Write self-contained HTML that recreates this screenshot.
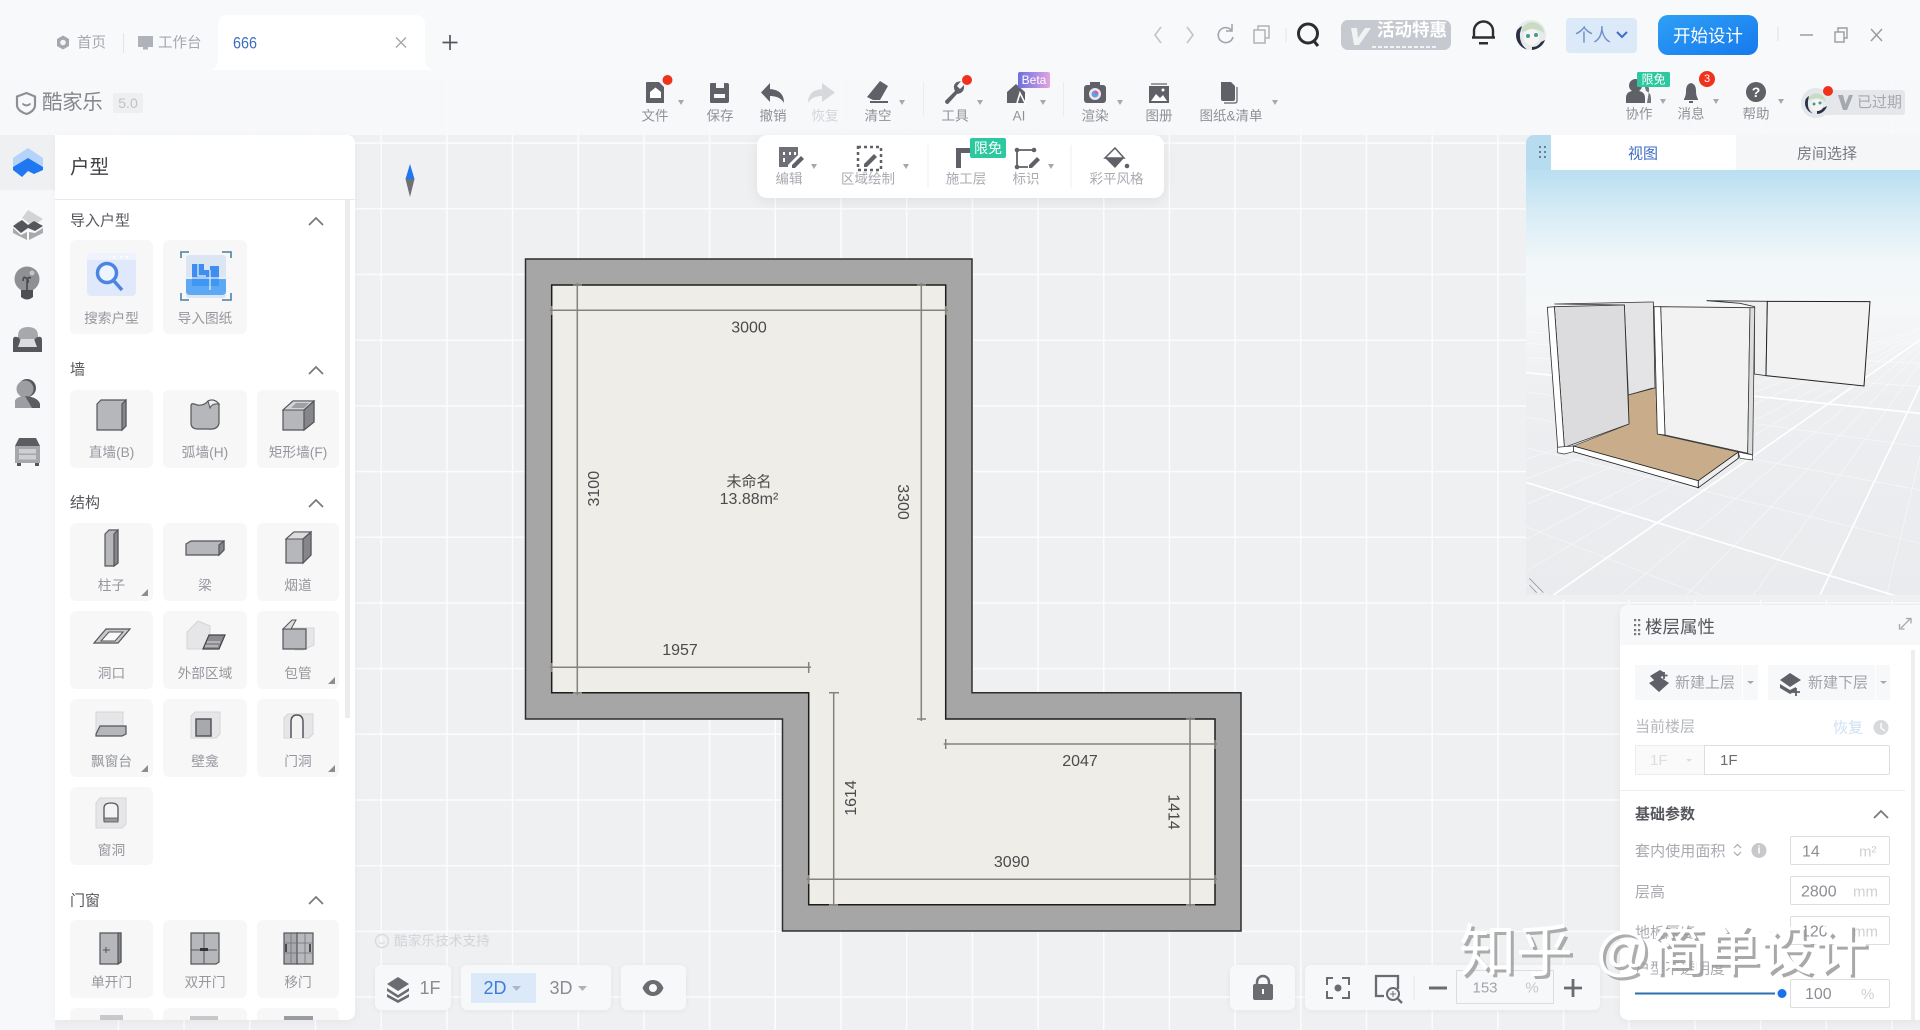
<!DOCTYPE html>
<html lang="zh-CN"><head><meta charset="utf-8"><title>酷家乐</title>
<style>
*{box-sizing:border-box;margin:0;padding:0}
html,body{width:1920px;height:1030px;overflow:hidden;background:#eff0f2}
body{position:relative;font-family:"Liberation Sans","Noto Sans CJK SC",sans-serif}
.a{position:absolute}
.grid{left:0;top:0;width:1920px;height:1030px;background-color:#eff0f2;background-image:linear-gradient(to right,#fbfcfd 1.5px,transparent 1.5px),linear-gradient(to bottom,#fbfcfd 1.5px,transparent 1.5px);background-size:65.7px 65.7px;background-position:52px 11px}
.c{position:absolute;background:#f7f7f8;border-radius:6px}
.box{position:absolute;background:#f7f8f9;border-radius:6px;box-shadow:0 1px 6px rgba(0,0,0,.05)}
svg.l{position:absolute;left:0;top:0;font-family:"Liberation Sans","Noto Sans CJK SC",sans-serif}
svg text{dominant-baseline:central;transform:translateY(1px)}
svg .wm text{transform:none}
.m{text-anchor:middle}
.t13{font-size:13.5px;fill:#8f9197}
.t12{font-size:13.5px;fill:#a9abb1}
.cl{font-size:13.7px;fill:#95979d;text-anchor:middle}
.st{font-size:15px;fill:#55575c}
.chev{fill:none;stroke:#77797f;stroke-width:1.7}
.ic{fill:#5f6068}
.ar{fill:#a6a8ae}
.d{fill:#85868b;stroke:#55565a;stroke-width:1.2}
.w{fill:#b6b7bb;stroke:#55565a;stroke-width:1.2}
.lt{fill:#e6e6e8;stroke:#d5d5d8;stroke-width:1}
.dim{stroke:#85827c;stroke-width:1.5;fill:none}
.dt{font-size:16px;fill:#4b4b4e;text-anchor:middle}
.pl{font-size:15px;fill:#a8aab0}
.unit{font-size:15px;fill:#cfd1d5}
.val{font-size:16px;fill:#8d8f95}
</style></head><body>
<div class="a grid"></div>
<!-- top translucent -->
<div class="a" style="left:0;top:0;width:1920px;height:135px;background:linear-gradient(to bottom,#f8f9fb 0,#f8f9fb 72px,rgba(248,249,251,.93) 78px,rgba(248,249,251,.93) 100%)"></div>
<!-- left rail -->
<div class="a" style="left:0;top:135px;width:55px;height:895px;background:rgba(248,249,251,.93)"></div>
<div class="a" style="left:0;top:135px;width:55px;height:55px;background:#eff0f2"></div>
<!-- left panel -->
<div class="a" style="left:55px;top:135px;width:300px;height:885px;background:#fff;border-radius:0 8px 8px 0;overflow:hidden;box-shadow:0 2px 10px rgba(0,0,0,.04)">
 <div class="a" style="left:0;top:64px;width:300px;height:1px;background:#e9eaec"></div>
 <div class="a" style="left:290px;top:65px;width:5px;height:518px;background:#ececee"></div>
 <div class="c" style="left:15px;top:105px;width:83px;height:94px"></div><div class="c" style="left:108px;top:105px;width:84px;height:94px"></div>
 <div class="c" style="left:15px;top:255px;width:83px;height:78px"></div><div class="c" style="left:108px;top:255px;width:84px;height:78px"></div><div class="c" style="left:202px;top:255px;width:82px;height:78px"></div>
 <div class="c" style="left:15px;top:388px;width:83px;height:78px"></div><div class="c" style="left:108px;top:388px;width:84px;height:78px"></div><div class="c" style="left:202px;top:388px;width:82px;height:78px"></div>
 <div class="c" style="left:15px;top:476px;width:83px;height:78px"></div><div class="c" style="left:108px;top:476px;width:84px;height:78px"></div><div class="c" style="left:202px;top:476px;width:82px;height:78px"></div>
 <div class="c" style="left:15px;top:564px;width:83px;height:78px"></div><div class="c" style="left:108px;top:564px;width:84px;height:78px"></div><div class="c" style="left:202px;top:564px;width:82px;height:78px"></div>
 <div class="c" style="left:15px;top:652px;width:83px;height:78px"></div>
 <div class="c" style="left:15px;top:785px;width:83px;height:78px"></div><div class="c" style="left:108px;top:785px;width:84px;height:78px"></div><div class="c" style="left:202px;top:785px;width:82px;height:78px"></div>
 <div class="c" style="left:15px;top:873px;width:83px;height:12px;border-radius:6px 6px 0 0"></div><div class="c" style="left:108px;top:873px;width:84px;height:12px;border-radius:6px 6px 0 0"></div><div class="c" style="left:202px;top:873px;width:82px;height:12px;border-radius:6px 6px 0 0"></div>
</div>
<!-- sub toolbar -->
<div class="a" style="left:757px;top:135px;width:407px;height:63px;background:#fff;border-radius:10px;box-shadow:0 3px 14px rgba(0,0,0,.07)"></div>
<!-- bottom boxes -->
<div class="box" style="left:375px;top:965px;width:76px;height:45px"></div>
<div class="box" style="left:461px;top:965px;width:150px;height:45px"></div>
<div class="a" style="left:471px;top:973px;width:65px;height:30px;background:#dce9f8"></div>
<div class="box" style="left:621px;top:965px;width:65px;height:45px"></div>
<div class="box" style="left:1230px;top:965px;width:65px;height:45px"></div>
<div class="box" style="left:1305px;top:965px;width:295px;height:45px"></div>
<div class="a" style="left:1456px;top:970px;width:98px;height:34px;border:1px solid #dcdde0"></div>
<!-- 3D view -->
<div class="a" style="left:1526px;top:135px;width:394px;height:465px;background:#eff0f2;border-radius:8px 0 0 0;overflow:hidden">
 <div class="a" style="left:0;top:0;width:25px;height:35px;background:#b7dcef"></div>
 <div class="a" style="left:25px;top:0;width:185px;height:35px;background:#fff"></div>
 <div class="a" style="left:210px;top:0;width:184px;height:35px;background:#f5f6f8"></div>
</div>
<svg class="a" style="left:1526px;top:170px" width="394" height="425" viewBox="18 120 1182 1275">
 <defs><linearGradient id="sky" x1="0" y1="0" x2="0" y2="1"><stop offset="0" stop-color="#b9dff1"/><stop offset=".28" stop-color="#d6ebf5"/><stop offset=".62" stop-color="#f2f7f9"/><stop offset="1" stop-color="#f6f7f8"/></linearGradient>
 <linearGradient id="fl" x1="0" y1="0" x2="0" y2="1"><stop offset="0" stop-color="#f5f6f7"/><stop offset=".3" stop-color="#eceef0"/><stop offset="1" stop-color="#e9ebee"/></linearGradient></defs>
 <rect x="18" y="120" width="1182" height="440" fill="url(#sky)"/>
 <rect x="18" y="560" width="1182" height="835" fill="url(#fl)"/>
 <path d="M1300 560L-1200 1395M1300 560L-900 1395M1300 560L-600 1395M1300 560L-300 1395M1300 560L-100 1395M1300 560L300 1395M1300 560L500 1395M1300 560L700 1395M1300 560L1100 1395M1300 560L1300 1395M-1600 560L1200 640M-1600 560L1200 700M-1600 560L1200 770M-1600 560L1200 950M-1600 560L1200 1080M-1600 560L1200 1240M-1600 560L1200 1650M-1600 560L1200 1950M-1600 560L1200 2300" stroke="#fff" stroke-width="2" fill="none" opacity=".6"/>
 <path d="M1300 560L100 1395M1300 560L900 1395M-1600 560L1200 850M-1600 560L1200 1420M-1600 560L1200 2800" stroke="#fff" stroke-width="5" fill="none"/>
 <path d="M560 512L742 514L738 737L703 732L704 530L660 520Z" fill="#efeff0" stroke="#333" stroke-width="2.5"/>
 <path d="M742 514L1050 515L1032 768L738 737Z" fill="#f2f2f3" stroke="#222" stroke-width="3"/>
 <path d="M103 522L390 516L400 516L405 775L396 775L325 795L313 525Z" fill="#e4e4e6" stroke="#333" stroke-width="2.5"/>
 <path d="M160 948L327 882L325 795L408 773L412 912L655 966L535 1052Z" fill="#c9ad8a" stroke="#333" stroke-width="2"/>
 <path d="M160 948L535 1052L535 1073L160 965Z" fill="#fff" stroke="#222" stroke-width="2.5"/>
 <path d="M535 1052L655 966L655 985L535 1073Z" fill="#eeeeee" stroke="#222" stroke-width="2.5"/>
 <path d="M103 530L313 525L327 882L133 952Z" fill="#dcdcde" stroke="#333" stroke-width="2.5"/>
 <path d="M82 532L103 530L133 950L113 952Z" fill="#fff" stroke="#333" stroke-width="2.5"/>
 <path d="M113 952L133 950L160 948L160 965L133 972L113 968Z" fill="#fff" stroke="#333" stroke-width="2"/>
 <path d="M422 530L690 533L683 970L435 915Z" fill="#f2f2f3" stroke="#333" stroke-width="2.5"/>
 <path d="M402 530L422 530L435 915L412 912Z" fill="#fff" stroke="#333" stroke-width="2.5"/>
 <path d="M690 533L704 533L698 975L683 970Z" fill="#ddd" stroke="#444" stroke-width="2.5"/>
 <path d="M655 966L698 975L698 990L660 985Z" fill="#fff" stroke="#333" stroke-width="2"/>
 <path d="M28 1345L70 1388M28 1365L50 1388" stroke="#999" stroke-width="2.5" fill="none"/>
</svg>
<!-- properties -->
<div class="a" style="left:1620px;top:605px;width:300px;height:415px;background:#fff;border-radius:8px 0 0 8px;box-shadow:0 2px 10px rgba(0,0,0,.05);overflow:hidden">
 <div class="a" style="left:0;top:0;width:300px;height:40px;background:#f7f8f9"></div>
 <div class="a" style="left:15px;top:60px;width:107px;height:35px;background:#f7f8f9"></div>
 <div class="a" style="left:123px;top:60px;width:15px;height:35px;background:#f7f8f9"></div>
 <div class="a" style="left:148px;top:60px;width:107px;height:35px;background:#f7f8f9"></div>
 <div class="a" style="left:256px;top:60px;width:14px;height:35px;background:#f7f8f9"></div>
 <div class="a" style="left:15px;top:140px;width:70px;height:30px;background:#fafafa;border:1px solid #eceded"></div>
 <div class="a" style="left:84px;top:140px;width:186px;height:30px;border:1px solid #dcdde0;border-radius:0 2px 2px 0"></div>
 <div class="a" style="left:0;top:185px;width:285px;height:1px;background:#eceded"></div>
 <div class="a" style="left:170px;top:231px;width:100px;height:29px;border:1px solid #dcdde0;border-radius:2px"></div>
 <div class="a" style="left:170px;top:271px;width:100px;height:29px;border:1px solid #dcdde0;border-radius:2px"></div>
 <div class="a" style="left:170px;top:311px;width:100px;height:29px;border:1px solid #dcdde0;border-radius:2px"></div>
 <div class="a" style="left:170px;top:374px;width:100px;height:29px;border:1px solid #dcdde0;border-radius:2px"></div>
 <div class="a" style="left:291px;top:45px;width:4px;height:370px;background:#eeeeef"></div>
</div>

<svg class="l" width="1920" height="1030">
 <!-- tab bar -->
 <path d="M209 70Q218 69 218 58V25Q218 15 228 15H415Q425 15 425 25V58Q425 69 435 70Z" fill="#fff"/>
 <path d="M63 35.500L69 39V46L63 49.500L57 46V39Z" fill="#a5a7ae"/><circle cx="63" cy="42.500" r="2.800" fill="#f3f4f6"/>
 <text x="77" y="42.500" font-size="14.500" fill="#a5a7ae">首页</text>
 <path d="M123.500 33V53" stroke="#e4e5e8"/>
 <rect x="138" y="36" width="15" height="11" fill="#b0b2bb"/><rect x="143" y="47" width="5" height="2.500" fill="#b0b2bb"/>
 <text x="158" y="42.500" font-size="14.500" fill="#a5a7ae">工作台</text>
 <text x="233" y="42" font-size="17" textLength="24" lengthAdjust="spacingAndGlyphs" fill="#3f6cc4">666</text>
 <path d="M396 37.500L406 47.500M406 37.500L396 47.500" stroke="#a5a7ae" stroke-width="1.400"/>
 <path d="M450 35V50M442.500 42.500H457.500" stroke="#55565c" stroke-width="1.700"/>
 <!-- logo -->
 <path d="M26.500 93L35 96.500V105C35 110 30 113 26.500 114C23 113 17 110 17 105V96.500Z" fill="none" stroke="#8c8f95" stroke-width="2.200" stroke-linejoin="round"/>
 <path d="M22.500 103.500Q26.500 107.500 30.500 103.500" fill="none" stroke="#8c8f95" stroke-width="1.800"/>
 <text x="42" y="101.500" font-size="20.500" fill="#85888e" letter-spacing="-.4">酷家乐</text>
 <rect x="113" y="93" width="30" height="20" fill="#eeeff1" rx="2"/><text x="128" y="102" class="m" font-size="14" fill="#bfc1c6">5.0</text>

 <!-- top right -->
 <path d="M1161 27L1155 35L1161 43M1187 27L1193 35L1187 43" fill="none" stroke="#c3c5ca" stroke-width="1.700"/>
 <path d="M1232 31A7.500 7.500 0 1 0 1233 37M1232 24V31H1226" fill="none" stroke="#a3a5ab" stroke-width="1.600"/>
 <rect x="1254" y="30" width="11" height="13" fill="none" stroke="#b0b2b7" stroke-width="1.500"/><path d="M1258 30V26H1269V38H1265" fill="none" stroke="#b0b2b7" stroke-width="1.500"/>
 <path d="M1286 28V42" stroke="#e4e5e8"/>
 <circle cx="1308" cy="33.500" r="9.500" fill="none" stroke="#2d2e32" stroke-width="3"/><path d="M1313 40L1318 46" stroke="#2d2e32" stroke-width="3"/>
 <rect x="1341" y="20" width="110" height="30" rx="7" fill="#c6c9cf"/>
 <path d="M1351 28H1357L1358 38L1365 28H1371L1359 45H1354Z" fill="#f1f2f4"/>
 <text x="1412" y="29" class="m" font-size="17.500" font-weight="700" fill="#fff">活动特惠</text>
 <path d="M1372 47H1438" stroke="#fff" stroke-width="1.600" stroke-dasharray="4 2"/>
 <path d="M1474 37V31A9.500 9.500 0 0 1 1493 31V37" fill="none" stroke="#2d2e32" stroke-width="2.400"/><path d="M1472 37.500H1495" stroke="#2d2e32" stroke-width="2.400"/><rect x="1479" y="42" width="9" height="2.500" fill="#2d2e32"/>
 <!-- avatar -->
 <circle cx="1531" cy="35" r="15" fill="#e4ebea"/>
 <path d="M1516 35A15 15 0 0 0 1527 49.500Q1519 44 1520 33L1522 26Q1516 29 1516 35Z" fill="#2b2e45"/>
 <path d="M1532 50A15 15 0 0 0 1545 40L1541 42Q1538 47 1532 47Z" fill="#2b2e45"/>
 <path d="M1522 28Q1530 18 1540 25Q1544 28 1544 33Q1536 26 1522 32Z" fill="#c8dcc4"/>
 <circle cx="1531.500" cy="37" r="8" fill="#f7f4f2"/>
 <circle cx="1528" cy="36" r="2" fill="#3f9a9c"/><circle cx="1536" cy="35" r="2" fill="#3f9a9c"/>
 <rect x="1566" y="18" width="71" height="35" rx="4" fill="#dce9f8"/>
 <text x="1593" y="34.500" class="m" font-size="18" fill="#6f8fc6">个人</text><path d="M1617 32L1622 37L1627 32" fill="none" stroke="#3f6cc4" stroke-width="2"/>
 <defs><linearGradient id="btn" x1="0" y1="0" x2="1" y2="1"><stop offset="0" stop-color="#2ea0f5"/><stop offset="1" stop-color="#1779ee"/></linearGradient></defs>
 <rect x="1658" y="15" width="100" height="40" rx="10" fill="url(#btn)"/>
 <text x="1708" y="35" class="m" font-size="17.500" fill="#fff">开始设计</text>
 <path d="M1778 27V41" stroke="#dfe0e3"/>
 <path d="M1800 35H1813" stroke="#9a9ca2" stroke-width="1.500"/>
 <rect x="1835" y="32" width="9" height="10" fill="none" stroke="#9a9ca2" stroke-width="1.400"/><path d="M1838 32V28H1847V38H1844" fill="none" stroke="#9a9ca2" stroke-width="1.400"/>
 <path d="M1871 29L1882 41M1882 29L1871 41" stroke="#9a9ca2" stroke-width="1.500"/>

 <!-- toolbar icons -->
 <g class="ic">
  <path d="M647 82H659L664 87V103H647Q646 103 646 102V83Q646 82 647 82Z"/><path d="M650 92L655.500 87.500L661 92V98H650Z" fill="#fff"/>
  <path d="M711 83H727Q729 83 729 85V101Q729 103 727 103H711Q710 103 710 102V84Q710 83 711 83ZM716 83V88H724V83ZM714 94V98H725V94Z" fill-rule="evenodd"/>
  <path d="M770 83V89Q784 90 784 103Q780 96 770 96V102L761 92.500Z"/>
  <path d="M823 83V89Q809 90 809 103Q813 96 823 96V102L836 92.500Z" transform="translate(-1 0)" fill="#d7d8dc"/>
  <path d="M867 97L880 81L888 86L880 100H873Z"/><path d="M870 102H888" stroke="#5f6068" stroke-width="2"/>
  <path d="M945 101L955 91Q952 85 957 82L961 81L957 86L960 89L964 85Q965 93 957 94L948 104Q945 104 945 101Z"/>
  <path d="M1007 103V92L1016 84L1025 92V103Z"/><path d="M1017 103L1020 93L1025 103L1028 93" fill="none" stroke="#fff" stroke-width="1.600"/>
  <rect x="1084" y="85" width="22" height="18" rx="3"/><rect x="1090" y="82" width="10" height="4"/><circle cx="1095" cy="94" r="6" fill="#f1e6f0"/><circle cx="1095" cy="94" r="3.500" fill="#5aa6d9"/><path d="M1095 90.500A3.500 3.500 0 0 1 1098.500 94H1095Z" fill="#e0559e"/>
  <rect x="1149" y="86" width="20" height="17"/><rect x="1151" y="83" width="16" height="2" opacity=".6"/><path d="M1151 101L1156 94L1160 98L1163 95L1167 101Z" fill="#fff"/><circle cx="1163" cy="90" r="1.500" fill="#fff"/>
  <path d="M1221 82H1231L1235 86V99Q1235 101 1233 101H1223Q1221 101 1221 99Z"/><path d="M1237 87V101Q1237 103 1235 103H1224" fill="none" stroke="#5f6068" stroke-width="1.200"/>
  <path d="M1626 103V98Q1626 92 1632 91A6.500 6.500 0 1 1 1639 91Q1645 92 1645 98V103Z"/><path d="M1647 103H1651V98Q1651 93 1646 91L1644 84Q1650 86 1649 91" opacity=".85"/>
  <path d="M1684 99Q1686 96 1686 91Q1686 84 1691 83Q1696 84 1696 91Q1696 96 1698 99V100H1684Z"/><rect x="1689" y="101" width="4" height="2"/>
  <circle cx="1756" cy="92" r="10"/>
 </g>
 <text x="1756" y="91" class="m" font-size="14" font-weight="700" fill="#fff">?</text>
 <circle cx="667.500" cy="80" r="5" fill="#f0321c"/><circle cx="967" cy="80" r="5" fill="#f0321c"/>
 <defs><linearGradient id="beta" x1="0" y1="0" x2="1" y2="0"><stop offset="0" stop-color="#6a6fe0"/><stop offset="1" stop-color="#e3a4e0"/></linearGradient></defs>
 <rect x="1018" y="72" width="32" height="16" rx="2" fill="url(#beta)"/><text x="1034" y="79" class="m" font-size="12" fill="#fff">Beta</text>
 <g class="t13">
  <text x="655" y="115" class="m">文件</text><text x="720" y="115" class="m">保存</text><text x="773" y="115" class="m">撤销</text>
  <text x="825" y="115" class="m" style="fill:#d5d6da">恢复</text><text x="878" y="115" class="m">清空</text><text x="955" y="115" class="m">工具</text>
  <text x="1019" y="115" class="m">AI</text><text x="1095" y="115" class="m">渲染</text><text x="1159" y="115" class="m">图册</text><text x="1231" y="115" class="m">图纸&amp;清单</text>
  <text x="1639" y="113" class="m">协作</text><text x="1691" y="113" class="m">消息</text><text x="1756" y="113" class="m">帮助</text>
 </g>
 <path d="M923.500 82V116M1063.500 82V116" stroke="#ebecee"/>
 <g class="ar"><path d="M678 100H684L681 105ZM899 100H905L902 105ZM977 100H983L980 105ZM1040 100H1046L1043 105ZM1117 100H1123L1120 105ZM1272 100H1278L1275 105ZM1660 99H1666L1663 104ZM1713 99H1719L1716 104ZM1778 99H1784L1781 104Z"/></g>
 <!-- collab badges -->
 <rect x="1637" y="72" width="33" height="15" rx="1.500" fill="#2cc9a0"/><text x="1653.500" y="78.500" class="m" font-size="12" fill="#fff">限免</text>
 <circle cx="1707" cy="79" r="8" fill="#f0321c"/><text x="1707" y="78" class="m" font-size="11" fill="#fff">3</text>
 <rect x="1815" y="90" width="90" height="25" rx="3" fill="#e6e7ea"/>
 <path d="M1838 95L1843 110H1847L1853 95H1849L1845.500 104L1843 95Z" fill="#a5a8ae"/>
 <text x="1857" y="101.500" font-size="15" fill="#a5a8ae">已过期</text>
 <circle cx="1816" cy="103" r="15" fill="#e3e6ea"/>
 <circle cx="1816" cy="103" r="11" fill="#e4ebea"/>
 <path d="M1805 103A11 11 0 0 0 1813 113.500Q1807 110 1808 101L1809 96Q1805 98 1805 103Z" fill="#2b2e45"/>
 <path d="M1817 114A11 11 0 0 0 1827 106L1823 108Q1821 111 1817 111Z" fill="#2b2e45"/>
 <path d="M1809 97Q1815 90 1823 96Q1826 99 1826 102Q1820 96 1809 100Z" fill="#c8dcc4"/>
 <circle cx="1816.500" cy="105" r="6" fill="#f7f4f2"/><circle cx="1814" cy="104" r="1.500" fill="#3f9a9c"/><circle cx="1820" cy="103" r="1.500" fill="#3f9a9c"/>
 <circle cx="1828" cy="91" r="5" fill="#f0321c"/>

 <!-- sub toolbar -->
 <g class="ic">
  <path d="M779 147H798V155L792 161L788 165V167H779Z" opacity=".9"/><path d="M783 152H785V155H783ZM789 152H791V155H789ZM794 152H796V155H794ZM783 158H785V162H783Z" fill="#fff"/><path d="M792 165L801 156L804 159L795 168H792Z"/>
  <path d="M858 147H881V170H858Z" fill="none" stroke="#5f6068" stroke-width="2.500" stroke-dasharray="3 3"/><path d="M864 164L874 154L877 157L867 167H864Z"/>
  <path d="M956 148H974V153H961V168H956Z"/>
  <path d="M1017 150H1034M1017 150V167H1028" fill="none" stroke="#5f6068" stroke-width="1.800"/><circle cx="1017" cy="150" r="2.300"/><circle cx="1034" cy="150" r="2.300"/><circle cx="1017" cy="167" r="2.300"/><path d="M1029 165L1037 157L1040 160L1032 168H1029Z"/>
  <path d="M1105 158L1115 148L1124 158L1115 168Z"/><path d="M1105 158H1124L1115 148Z" fill="#fff" stroke="#5f6068" stroke-width="1.500"/><circle cx="1127" cy="166" r="2.300"/>
 </g>
 <g class="t12">
  <text x="789" y="178" class="m">编辑</text><text x="868" y="178" class="m">区域绘制</text><text x="966" y="178" class="m">施工层</text><text x="1026" y="178" class="m">标识</text><text x="1116.500" y="178" class="m">彩平风格</text>
 </g>
 <path d="M928 145V188M1071 145V188" stroke="#eeeff1"/>
 <path class="ar" d="M811 164H817L814 169ZM903 164H909L906 169ZM1048 164H1054L1051 169Z"/>
 <rect x="970" y="138" width="36" height="20" rx="2" fill="#2cc9a0"/><text x="988" y="147" class="m" font-size="14" fill="#fff">限免</text>

 <!-- rail icons -->
 <path d="M28 148L43 158V167L28 159L13 167V158Z" fill="#b6d3fb"/><path d="M13 167L28 158L43 167V170L34 174L28 171L22 177L13 170Z" fill="#1f78f2"/>
 <path d="M28 210L43 219L33 226L22 218ZM19 221L28 227L24 230L15 224Z" fill="#d2d3d5"/><path d="M13 226L22 220L28 225L34 221L43 226L35 231L28 228L21 233Z" fill="#55565c"/><path d="M13 228L21 235L27 232V240L13 233ZM43 228L35 233L29 232V240L43 233Z" fill="#a8a9ad"/>
 <circle cx="27" cy="279" r="12.500" fill="#8f9094"/><circle cx="32" cy="273" r="2.500" fill="#c4c5c8"/><path d="M23 281Q23 276 26 278Q30 281 27 283M27 283V292M27 283Q27 276 31 278" fill="none" stroke="#4e4f54" stroke-width="1.800"/><path d="M21 290H33V297Q27 302 21 297Z" fill="#4e4f54"/>
 <path d="M18 336Q18 327 28 327Q38 327 38 336V341H18Z" fill="#a7a8ac"/><path d="M13 340Q13 336 17 337Q20 337 20 342L34 342Q35 337 38 337Q42 336 42 340V352H13Z" fill="#56575d"/><path d="M21 339H34L37 347H18Z" fill="#dcdcde"/>
 <circle cx="27" cy="388" r="9" fill="#55565c"/><circle cx="25" cy="389" r="8.500" fill="#9d9ea2"/><path d="M15 408V402Q15 397 25 396Q38 397 40 404V408Z" fill="#5c5d63"/><path d="M15 408V402Q15 397 25 396L32 408Z" fill="#9d9ea2"/>
 <path d="M19 438H36L40 446H15Z" fill="#5c5d63"/><rect x="15" y="446" width="25" height="17" fill="#a6a7ab"/><rect x="19" y="449" width="17" height="4.500" fill="#cfcfd2"/><rect x="19" y="455" width="17" height="4.500" fill="#cfcfd2"/><rect x="17" y="463" width="4" height="3" fill="#55565c"/><rect x="35" y="463" width="4" height="3" fill="#55565c"/>

 <!-- panel text -->
 <text x="70" y="166.500" font-size="19.500" fill="#3f4045">户型</text>
 <text x="70" y="220" class="st">导入户型</text><text x="70" y="369" class="st">墙</text><text x="70" y="502" class="st">结构</text><text x="70" y="900" class="st">门窗</text>
 <path class="chev" d="M309 225L316 218L323 225M309 374L316 367L323 374M309 507L316 500L323 507M309 904L316 897L323 904"/>
 <g class="cl">
  <text x="111.500" y="317.500">搜索户型</text><text x="205" y="317.500">导入图纸</text>
  <text x="111.500" y="451.500">直墙(B)</text><text x="205" y="451.500">弧墙(H)</text><text x="298" y="451.500">矩形墙(F)</text>
  <text x="111.500" y="584.500">柱子</text><text x="205" y="584.500">梁</text><text x="298" y="584.500">烟道</text>
  <text x="111.500" y="672.500">洞口</text><text x="205" y="672.500">外部区域</text><text x="298" y="672.500">包管</text>
  <text x="111.500" y="760.500">飘窗台</text><text x="205" y="760.500">壁龛</text><text x="298" y="760.500">门洞</text>
  <text x="111.500" y="849.500">窗洞</text>
  <text x="111.500" y="981.500">单开门</text><text x="205" y="981.500">双开门</text><text x="298" y="981.500">移门</text>
 </g>
 <!-- search card icon -->
 <rect x="87" y="253" width="49" height="43" rx="4" fill="#dfe9fb"/><path d="M87 258Q87 253 91 253H132Q136 253 136 258V260H87Z" fill="#eef3fd"/>
 <circle cx="107" cy="273" r="9.500" fill="#eef4ff" stroke="#4d84df" stroke-width="3.500"/><path d="M114 281L122 290" stroke="#4d84df" stroke-width="3.500"/>
 <circle cx="114" cy="257" r="1.200" fill="#fff"/><circle cx="121" cy="257" r="1.200" fill="#fff"/><circle cx="127" cy="257" r="1.200" fill="#fff"/>
 <!-- import card icon -->
 <rect x="186" y="255" width="40" height="43" rx="3" fill="#dce5f2"/>
 <path d="M192 264H204V270H210V266H219V286H192Z" fill="#3f8df0"/><path d="M186 279H226V291Q226 295 222 295H190Q186 295 186 291Z" fill="#3f9af2" opacity=".8"/>
 <path d="M198 264V276H206M210 270V290M183 278H231" stroke="#e9f2ff" stroke-width="1.200" fill="none"/>
 <path d="M181 258V252H189M222 252H231V258M181 293V300H189M222 300H231V293" fill="none" stroke="#5f8fb0" stroke-width="1.800"/>
 <!-- wall cards -->
 <path class="w" d="M97 404L101 400H126V426L122 430H97Z"/><path class="d" d="M122 404L126 400V426L122 430Z"/>
 <path class="w" d="M191 406Q191 402 197 405Q204 406 208 401Q214 398 219 404V423Q218 430 208 429H198Q191 429 191 423Z"/><path d="M208 401Q214 398 219 404Q212 403 210 408Z" fill="#eee" stroke="#55565a"/>
 <path class="w" d="M283 410L293 401H314V422L304 430H283Z"/><path d="M283 410L293 401H314L304 410Z" fill="#d4d4d6" stroke="#55565a"/><path class="d" d="M304 410L314 401V422L304 430Z"/><path d="M291 408L296 403H309L304 408Z" fill="#9e9fa3"/>
 <!-- struct cards -->
 <path class="w" d="M105 534L109 530H118V563L114 566H105Z"/><path class="d" d="M114 534L118 530V563L114 566Z"/>
 <path class="w" d="M186 544L191 541H224V550L219 555H186Z"/><path class="d" d="M219 545L224 541V550L219 555Z"/>
 <path class="w" d="M286 539L294 532H311V555L303 563H286Z"/><path d="M286 539L294 532H311L303 539Z" fill="#dcdcde" stroke="#55565a"/><path class="d" d="M303 539L311 532V555L303 563Z"/>
 <path d="M94 643L106 629H130L118 643Z" fill="#c8c8cb" stroke="#55565a" stroke-width="1.200"/><path d="M101 641L109 632H123L115 641Z" fill="#fafafa" stroke="#55565a"/>
 <path class="lt" d="M187 632L198 621L210 626V649H187Z"/><path d="M203 649L209 635H225L219 649Z" fill="#8b8c90" stroke="#444" stroke-width="1.200"/><path d="M207 642H220M205 646H218" stroke="#ddd"/>
 <path class="lt" d="M291 628H314V645L303 650H295Z"/><path class="w" d="M283 629H306V649H283Z"/><path d="M283 629L292 620H296L291 629Z" fill="#ddd" stroke="#55565a"/>
 <rect class="lt" x="96" y="712" width="27" height="20"/><path class="w" d="M96 734L100 726H126V734L122 736H96Z"/>
 <path class="lt" d="M191 716L195 712H220V734L216 738H191Z"/><rect x="196" y="719" width="15" height="17" fill="#a8a9ad" stroke="#55565a" stroke-width="1.500"/>
 <path class="lt" d="M284 718L288 714H313V734L309 738H284Z"/><path d="M291 738V722Q291 715 297 715Q303 715 303 722V738" fill="#f3f3f4" stroke="#55565a" stroke-width="1.500"/>
 <path class="lt" d="M96 803L100 798H126V824L122 828H96Z"/><path d="M104 820V808Q104 803 111 803Q118 803 118 808V820Z" fill="#f3f3f4" stroke="#55565a" stroke-width="1.300"/><rect x="104" y="818" width="14" height="4" fill="#999" stroke="#55565a" stroke-width=".8"/>
 <path d="M141 596L148 589V596ZM328 684L335 677V684ZM141 772L148 765V772ZM328 772L335 765V772Z" fill="#8c8d91"/>
 <!-- door cards -->
 <path class="w" d="M100 933H121V962L118 964H100Z"/><path class="d" d="M118 933H121V962L118 964Z"/><path d="M103 950H110M106 947V953" stroke="#555"/>
 <path class="w" d="M191 933H219V962L216 964H191Z"/><path d="M204 933V964M191 950H217" stroke="#55565a"/><path d="M200 948H208V951H200Z" fill="#333"/>
 <rect x="284" y="933" width="14" height="31" fill="#a8a9ad" stroke="#55565a" stroke-width="1.200"/><rect x="297" y="933" width="16" height="31" fill="#b8b9bd" stroke="#55565a" stroke-width="1.200"/><path d="M284 943H313M284 953H313M291 933V964M305 933V964" stroke="#70717a" stroke-width=".8"/><path d="M286 944V952M310 944V952" stroke="#222" stroke-width="1.400"/>
 <rect x="100" y="1015" width="23" height="5" fill="#c8c8cb"/><rect x="190" y="1016" width="28" height="4" fill="#c8c8cb"/><rect x="284" y="1016" width="29" height="4" fill="#9a9ba0"/>

 <!-- compass -->
 <path d="M410 164L414.500 179H405.500Z" fill="#1f78f2"/><path d="M405.500 179H414.500L410 197Z" fill="#6f7076"/>

 <!-- floor plan -->
 <path d="M525.500 259H972V692.700H1241V931H782.500V719H525.500Z" fill="#a6a6a6" stroke="#2e2e2e" stroke-width="1.500"/>
 <path d="M551.700 285H945.700V719H1215V904.700H808.700V692.700H551.700Z" fill="#efede7" stroke="#1d1d1d" stroke-width="1.500"/>
 <g class="dim">
  <path d="M577.300 283V695M921.300 283V721M833.700 692.700V906M1190 717V906.500"/>
  <path d="M549.700 310.300H948M549.700 667.300H811M943.700 744H1217M806.700 879.300H1217"/>
  <path d="M573 285H582M573 692.700H582M917 285H926M917 719H926M829 692.700H839M829 904.700H838M1186 719H1195M1186 904.700H1195"/>
  <path d="M551.700 306V315M945.700 306V315M551.700 663V672M808.700 662V673M945.700 739V749M1215 740V749M808.700 875V884M1215 875V884"/>
 </g>
 <g class="dt">
  <text x="749" y="327">3000</text><text x="680" y="649.700">1957</text><text x="1080" y="760.700">2047</text><text x="1011.700" y="861.700">3090</text>
  <g transform="translate(593.700 488.700) rotate(-90)"><text>3100</text></g><g transform="translate(903.700 502) rotate(90)"><text>3300</text></g>
  <g transform="translate(850.700 798) rotate(-90)"><text>1614</text></g><g transform="translate(1174 812) rotate(90)"><text>1414</text></g>
  <text x="749" y="481" font-size="15">未命名</text><text x="749" y="498.700">13.88m²</text>
 </g>

 <!-- bottom controls -->
 <circle cx="382" cy="941" r="6.500" fill="none" stroke="#d9dadd" stroke-width="1.400"/><path d="M379 942Q382 945 385 942" fill="none" stroke="#d9dadd" stroke-width="1.200"/>
 <text x="394" y="940" font-size="13.700" fill="#d3d4d8">酷家乐技术支持</text>
 <path d="M398 977L409 984L398 991L387 984Z" fill="#6b6c72"/><path d="M387 988L398 995L409 988V991L398 998L387 991Z" fill="#6b6c72"/><path d="M387 994L398 1000L409 994V997L398 1003L387 997Z" fill="#6b6c72"/>
 <text x="430" y="987" class="m" font-size="18" fill="#8a8c92">1F</text>
 <text x="495" y="987" class="m" font-size="18" fill="#3a7fd9">2D</text><path d="M512 986H521L516.500 991Z" fill="#a7b9d2"/>
 <text x="561" y="987" class="m" font-size="18" fill="#8a8c92">3D</text><path d="M578 986H587L582.500 991Z" fill="#b0b2b7"/>
 <path d="M642.500 988Q646 980 653 980Q660 980 663.500 988Q660 996 653 996Q646 996 642.500 988Z" fill="#6b6c72"/><circle cx="653" cy="988" r="4" fill="#f7f8f9"/>
 <rect x="1253" y="984" width="20" height="16" rx="2" fill="#6b6c72"/><path d="M1257 984V982A6 6 0 0 1 1269 982V984" fill="none" stroke="#6b6c72" stroke-width="2.500"/><rect x="1262" y="989" width="2" height="5" fill="#fff"/>
 <path d="M1327 985V978H1333M1342 978H1349V985M1349 991V998H1342M1333 998H1327V991" fill="none" stroke="#6b6c72" stroke-width="2"/><circle cx="1338" cy="988" r="3.500" fill="#6b6c72"/>
 <path d="M1384 996H1376V976H1398V989" fill="none" stroke="#6b6c72" stroke-width="2.300"/><circle cx="1393" cy="994" r="6" fill="#f7f8f9" stroke="#6b6c72" stroke-width="2"/><path d="M1398 999L1402 1003" stroke="#6b6c72" stroke-width="2.300"/><path d="M1393 991V997M1390 994H1396" stroke="#6b6c72"/>
 <path d="M1414 976V1000" stroke="#e5e6e8"/>
 <path d="M1429 988H1447" stroke="#6b6c72" stroke-width="3"/>
 <text x="1485" y="987" class="m" font-size="15" fill="#a3a5ab">153</text><text x="1532" y="987" class="m" font-size="15" fill="#c5c7cb">%</text>
 <path d="M1573 979V997M1564 988H1582" stroke="#6b6c72" stroke-width="2.800"/>

 <!-- 3D header -->
 <g fill="#6c7f8c"><rect x="1539" y="146" width="2" height="2"/><rect x="1544" y="146" width="2" height="2"/><rect x="1539" y="151" width="2" height="2"/><rect x="1544" y="151" width="2" height="2"/><rect x="1539" y="156" width="2" height="2"/><rect x="1544" y="156" width="2" height="2"/></g>
 <text x="1643" y="153" class="m" font-size="15" fill="#3f6cc4">视图</text>
 <text x="1827" y="153" class="m" font-size="15" fill="#75777d">房间选择</text>

 <!-- properties text -->
 <g fill="#77797f"><rect x="1634" y="619" width="2.200" height="2.200"/><rect x="1638" y="619" width="2.200" height="2.200"/><rect x="1634" y="624" width="2.200" height="2.200"/><rect x="1638" y="624" width="2.200" height="2.200"/><rect x="1634" y="629" width="2.200" height="2.200"/><rect x="1638" y="629" width="2.200" height="2.200"/><rect x="1634" y="633" width="2.200" height="2.200"/><rect x="1638" y="633" width="2.200" height="2.200"/></g>
 <text x="1645" y="626" font-size="17.500" fill="#55575c">楼层属性</text>
 <path d="M1901 628L1910 619M1906 618.500H1911V623.500M1899.500 624V629H1904.500" fill="none" stroke="#a5a7ac" stroke-width="1.300"/>
 <path d="M1649 683L1660 677L1669 683L1659 692ZM1650 676L1660 670L1665 673L1656 682Z" fill="#5f6068"/><path d="M1664 672V679M1660.500 675.500H1667.500" stroke="#5f6068" stroke-width="1.800"/>
 <text x="1675" y="682" font-size="15" fill="#a0a2a8">新建上层</text><path d="M1747 681H1754L1750.500 684Z" fill="#a5a7ac"/>
 <path d="M1780 680L1790 673L1801 680L1790 687Z" fill="#5f6068"/><path d="M1780 684L1790 690L1796 687V691L1790 694L1780 688Z" fill="#5f6068"/><path d="M1796 688V696M1792 692H1800" stroke="#5f6068" stroke-width="1.800"/>
 <text x="1808" y="682" font-size="15" fill="#a0a2a8">新建下层</text><path d="M1880 681H1887L1883.500 684Z" fill="#a5a7ac"/>
 <text x="1635" y="726" class="pl" style="fill:#b5b7bc">当前楼层</text>
 <text x="1833" y="727" font-size="15" fill="#cfe0f2">恢复</text>
 <circle cx="1881" cy="727.500" r="7.500" fill="#d8d9dc"/><path d="M1881 723V728L1885 731" stroke="#fff" stroke-width="1.400" fill="none"/>
 <text x="1650" y="759.500" font-size="15" fill="#dcdde0">1F</text><path d="M1686 759H1692L1689 762Z" fill="#dcdde0"/>
 <text x="1720" y="759.500" font-size="15" fill="#6b6d72">1F</text>
 <text x="1635" y="813.500" font-size="15" font-weight="700" fill="#55575c">基础参数</text>
 <path d="M1874 818L1881 811L1888 818" fill="none" stroke="#77797f" stroke-width="1.800"/>
 <text x="1635" y="850.500" class="pl" letter-spacing=".1">套内使用面积</text>
 <path d="M1734 848L1737.500 844.500L1741 848M1734 852L1737.500 855.500L1741 852" fill="none" stroke="#a8aab0" stroke-width="1.200"/>
 <circle cx="1759" cy="850.500" r="7.500" fill="#c6c8cc"/><text x="1759" y="849.500" class="m" font-size="11" font-weight="700" fill="#fff">i</text>
 <text x="1802" y="851" class="val" style="fill:#8d8f95">14</text><text x="1859" y="851" class="unit">m²</text>
 <text x="1635" y="891.500" class="pl">层高</text><text x="1801" y="891" class="val">2800</text><text x="1853" y="891" class="unit">mm</text>
 <text x="1635" y="932" class="pl">地板厚度</text><text x="1801" y="931" class="val">120</text><text x="1853" y="931" class="unit">mm</text>
 <text x="1635" y="968" class="pl">户型不透明度</text>
 <path d="M1635 993.500H1775" stroke="#2a6fb0" stroke-width="2"/><circle cx="1782" cy="993.500" r="4.500" fill="#1a72e8"/>
 <text x="1805" y="993.500" class="val">100</text><text x="1861" y="993.500" class="unit">%</text>

 <!-- watermark -->
 <g class="wm">
  <text x="1462" y="955" font-size="57" fill="#9a9a9a" opacity=".8">知乎</text>
  <text x="1459" y="952" font-size="57" fill="#fff">知乎</text>
  <text x="1598" y="955" font-size="54" fill="#9a9a9a" opacity=".8">@</text>
  <text x="1595" y="952" font-size="54" fill="#fff">@</text>
  <text x="1655" y="955" font-size="54" fill="#9a9a9a" opacity=".85">简单设计</text>
  <text x="1652" y="952" font-size="54" fill="#fff">简单设计</text>
 </g>
</svg>
</body></html>
